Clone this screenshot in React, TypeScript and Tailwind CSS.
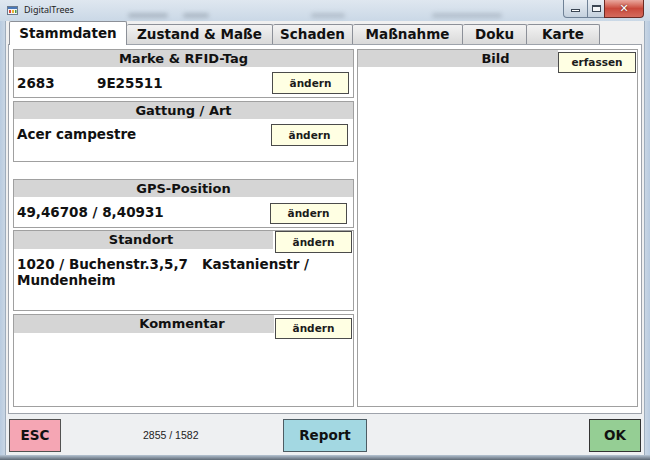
import React from "react";

function EditButton({
  label = "ändern",
  className = "",
}: {
  label?: string;
  className?: string;
}) {
  return (
    <div
      className={`flex shrink-0 items-center justify-center border border-[#4b4b4b] bg-[#ffffe3] text-[10.5px] font-bold leading-none text-[#1b1b1b] ${className}`}
    >
      {label}
    </div>
  );
}

function Header({ title }: { title: string }) {
  return (
    <div className="h-[17px] bg-[#d5d5d5] text-center text-[13px] font-bold leading-[17px] text-[#111]">
      {title}
    </div>
  );
}

function AppIcon() {
  return (
    <svg width="11" height="9" viewBox="0 0 11 9">
      <rect x="0.5" y="0.5" width="10" height="8" fill="#f4f4f4" stroke="#6b7b8f" />
      <rect x="1" y="1" width="9" height="2" fill="#4a78b8" />
      <rect x="2" y="4" width="2" height="3" fill="#d9473b" />
      <rect x="5" y="4" width="2" height="3" fill="#e8b530" />
      <rect x="8" y="4" width="1.5" height="3" fill="#4a9a4a" />
    </svg>
  );
}

const tabs = [
  { label: "Zustand & Maße", w: "w-[146px]" },
  { label: "Schaden", w: "w-[80px]" },
  { label: "Maßnahme", w: "w-[110px]" },
  { label: "Doku", w: "w-[64px]" },
  { label: "Karte", w: "w-[73px]" },
];

export default function App() {
  return (
    <div className="relative h-[460px] w-[650px] overflow-hidden bg-[#c3d2e1] font-['DejaVu_Sans',sans-serif] text-[#111]">
      {/* title bar */}
      <div className="relative flex h-[21px] items-start bg-gradient-to-b from-[#dfe7f0] to-[#cad8e6]">
        <div className="pointer-events-none absolute left-[128px] top-[13px] h-[5px] w-[40px] rounded-full bg-[#8a96a3] opacity-50 blur-[2px]" />
        <div className="pointer-events-none absolute left-[183px] top-[13px] h-[5px] w-[26px] rounded-full bg-[#8a96a3] opacity-50 blur-[2px]" />
        <div className="pointer-events-none absolute left-[311px] top-[13px] h-[5px] w-[34px] rounded-full bg-[#8a96a3] opacity-40 blur-[2px]" />
        <div className="pointer-events-none absolute left-[432px] top-[13px] h-[5px] w-[70px] rounded-full bg-[#8a96a3] opacity-40 blur-[2px]" />
        <div className="ml-[7px] mt-[6px] flex">
          <AppIcon />
        </div>
        <span className="relative ml-[6px] mt-[4px] font-['Noto_Sans',sans-serif] text-[9px] leading-[12px] text-[#1e1e1e]">
          DigitalTrees
        </span>
        {/* caption buttons */}
        <div className="relative ml-auto mr-[6px] flex h-[18px]">
          <div className="flex w-[25px] items-center justify-center rounded-bl-[4px] border border-t-0 border-[#6f8196] bg-gradient-to-b from-[#e9eef4] to-[#c5d1de]">
            <div className="mt-[4px] h-[3px] w-[9px] border border-[#3b4654] bg-white" />
          </div>
          <div className="flex w-[16px] items-center justify-center border-b border-[#6f8196] bg-gradient-to-b from-[#e9eef4] to-[#c5d1de]">
            <div className="h-[7px] w-[9px] border border-[#3b4654] border-t-2 bg-[#f4f6f8]" />
          </div>
          <div className="flex w-[40px] items-center justify-center rounded-br-[4px] border border-t-0 border-[#6b2a24] bg-gradient-to-b from-[#e9a89f] via-[#c9483b] to-[#d46a5c]">
            <span className="font-['DejaVu_Sans',sans-serif] text-[11px] font-bold leading-none text-white [text-shadow:0_0_2px_#4a1a16]">
              ✕
            </span>
          </div>
        </div>
      </div>

      <div className="flex h-[434px]">
        {/* left frame */}
        <div className="w-[6px] border-r border-[#9eadbd] bg-gradient-to-r from-[#b8cbe0] to-[#c9d6e4]" />

        {/* client area */}
        <div className="flex w-[638px] flex-col bg-[#f0f0f0]">
          {/* tab strip */}
          <div className="flex h-[23px] items-end pl-[3px]">
            <div className="relative z-10 -mb-px flex h-[24px] w-[118px] items-center justify-center rounded-t-[2px] border border-b-0 border-[#8c9098] bg-white text-[13.5px] font-bold">
              Stammdaten
            </div>
            {tabs.map((t) => (
              <div
                key={t.label}
                className={`flex h-[20px] ${t.w} items-center justify-center rounded-t-[2px] border-r border-t border-[#8c9098] bg-gradient-to-b from-[#f3f3f3] to-[#d9d9d9] text-[13.5px] font-bold`}
              >
                {t.label}
              </div>
            ))}
          </div>

          {/* tab page */}
          <div className="ml-[2px] flex h-[370px] w-[634px] gap-[3px] border border-[#9ea3ab] bg-white pl-[4px] pr-[3px] pt-[4px]">
            {/* left column */}
            <div className="flex w-[341px] flex-col">
              <div className="flex h-[49px] flex-col border border-[#a0a0a0]">
                <Header title="Marke & RFID-Tag" />
                <div className="mt-[5px] flex h-[22px] items-center justify-between pl-[3px] pr-[4px]">
                  <div className="flex text-[13.5px] font-bold">
                    <span className="w-[80px]">2683</span>
                    <span>9E25511</span>
                  </div>
                  <EditButton className="h-[22px] w-[77px]" />
                </div>
              </div>

              <div className="mt-[3px] flex h-[61px] flex-col border border-[#a0a0a0]">
                <Header title="Gattung / Art" />
                <div className="mt-[5px] flex h-[22px] items-center justify-between pl-[3px] pr-[5px]">
                  <span className="-mt-[2px] text-[13.5px] font-bold">Acer campestre</span>
                  <EditButton className="h-[22px] w-[77px]" />
                </div>
              </div>

              <div className="mt-[17px] flex h-[49px] flex-col border border-[#a0a0a0]">
                <Header title="GPS-Position" />
                <div className="mt-[6px] flex h-[21px] items-center justify-between pl-[3px] pr-[6px]">
                  <span className="-mt-[2px] text-[13.5px] font-bold">49,46708 / 8,40931</span>
                  <EditButton className="h-[21px] w-[77px]" />
                </div>
              </div>

              <div className="mt-[2px] flex h-[81px] flex-col border border-[#a0a0a0]">
                <div className="flex h-[22px] items-start">
                  <div className="h-[18px] w-[259px] bg-[#d5d5d5] pr-[5px] text-center text-[13px] font-bold leading-[18px]">
                    Standort
                  </div>
                  <EditButton className="ml-[2px] h-[22px] w-[77px]" />
                </div>
                <div className="mt-[3px] whitespace-pre-wrap pl-[3px] pr-[2px] text-[13.5px] font-bold leading-[16px]">
                  {"1020 / Buchenstr.3,5,7   Kastanienstr / Mundenheim"}
                </div>
              </div>

              <div className="mt-[3px] flex h-[93px] flex-col border border-[#a0a0a0]">
                <div className="flex items-start">
                  <div className="h-[18px] w-[260px] bg-[#d5d5d5] pl-[76px] text-center text-[13px] font-bold leading-[17px]">
                    Kommentar
                  </div>
                  <EditButton className="ml-[1px] mt-[3px] h-[21px] w-[77px]" />
                </div>
              </div>
            </div>

            {/* picture panel */}
            <div className="flex h-[358px] w-[281px] flex-col border border-[#a0a0a0]">
              <div className="flex items-start">
                <div className="h-[17px] w-[200px] bg-[#d5d5d5] pl-[75px] text-center text-[13px] font-bold leading-[17px]">
                  Bild
                </div>
                <EditButton label="erfassen" className="mt-[2px] h-[21px] w-[78px]" />
              </div>
            </div>
          </div>

          {/* bottom bar */}
          <div className="flex h-[41px] items-start bg-[#eef0f2] pl-[3px] pr-[3px] pt-[5px]">
            <div className="flex h-[33px] w-[52px] items-center justify-center border border-[#525252] bg-[#f5a6b4] text-[13.5px] font-bold">
              ESC
            </div>
            <div className="flex h-[33px] w-[222px] items-center pl-[82px] font-['Liberation_Sans',sans-serif] text-[10.5px] text-[#222]">
              2855 / 1582
            </div>
            <div className="flex h-[33px] w-[84px] items-center justify-center border border-[#4d5c63] bg-[#a3d8e2] text-[13.5px] font-bold">
              Report
            </div>
            <div className="ml-auto flex h-[33px] w-[52px] items-center justify-center border border-[#333] bg-[#95ce94] text-[13.5px] font-bold">
              OK
            </div>
          </div>
        </div>

        {/* right frame */}
        <div className="w-[6px] border-l border-[#9eadbd] bg-gradient-to-r from-[#c9d6e4] to-[#b8cbe0]" />
      </div>

      {/* bottom frame */}
      <div className="h-[5px] bg-gradient-to-b from-[#b6c5d4] to-[#5f6a76]" />
    </div>
  );
}
